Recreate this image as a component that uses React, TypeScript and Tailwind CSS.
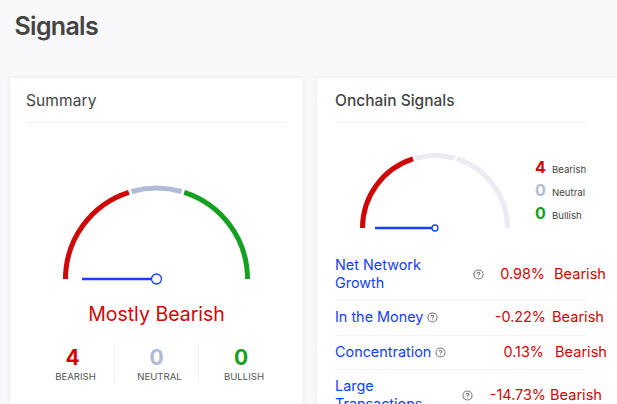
import { CircleHelp } from 'lucide-react';

type GaugeProps = {
  width: number;
  height: number;
  radius: number;
  hub: number;
  needle: number;
  gap: number;
  colors: [string, string, string];
};

const STROKE = 5;

function Gauge({ width, height, radius, hub, needle, gap, colors }: GaugeProps) {
  const cx = width / 2;
  const cy = height - 6;

  // angles run clockwise from the left end of the half circle
  const arc = (from: number, to: number) => {
    const point = (deg: number) => {
      const rad = (deg * Math.PI) / 180;
      return `${cx - radius * Math.cos(rad)} ${cy - radius * Math.sin(rad)}`;
    };
    return `M ${point(from)} A ${radius} ${radius} 0 0 1 ${point(to)}`;
  };

  return (
    <svg width={width} height={height} fill="none" className="block shrink-0">
      <path d={arc(0, 73.2 - gap)} stroke={colors[0]} strokeWidth={STROKE} />
      <path d={arc(73.2 + gap, 106.8 - gap)} stroke={colors[1]} strokeWidth={STROKE} />
      <path d={arc(106.8 + gap, 180)} stroke={colors[2]} strokeWidth={STROKE} />
      <path d={`M ${cx - needle} ${cy} H ${cx - hub}`} stroke="#1440fb" strokeWidth="2.5" />
      <circle cx={cx} cy={cy} r={hub} fill="#fff" stroke="#1440fb" strokeWidth="1.3" />
    </svg>
  );
}

const totals = [
  { label: 'Bearish', value: 4, color: 'text-[#cf0606]' },
  { label: 'Neutral', value: 0, color: 'text-[#b0bad5]' },
  { label: 'Bullish', value: 0, color: 'text-[#16a022]' },
];

const signals = [
  { name: 'Net Network Growth', value: '0.98%', row: 'h-[53px]', label: 'w-[138px]', amount: 'w-[72px]', state: 'ml-[9px]' },
  { name: 'In the Money', value: '-0.22%', row: 'h-[35px] pb-[2px]', label: 'w-[92px]', amount: 'w-[119px]', state: 'ml-[6px]' },
  { name: 'Concentration', value: '0.13%', row: 'h-[34px] pb-px', label: 'w-[100px]', amount: 'w-[109px]', state: 'ml-[11px]' },
  { name: 'Large Transactions', value: '-14.73%', row: 'h-[50px]', label: 'w-[127px]', amount: 'w-[84px]', state: 'ml-[4px]' },
];

function SummaryCard() {
  return (
    <section className="h-[360px] w-[293px] shrink-0 bg-white px-4 shadow-[0_0_4px_rgba(40,40,90,0.09)]">
      <h2 className="h-[45px] border-b border-[#f2f2f4] pt-[11px] text-[15.5px] leading-6 tracking-[0.1px]">Summary</h2>
      <div className="mt-[59px] flex justify-center">
        <Gauge
          width={191}
          height={103}
          radius={91}
          hub={5}
          needle={74.5}
          gap={0.9}
          colors={['#cf0606', '#b0bad5', '#16a022']}
        />
      </div>
      <p className="mt-[15px] text-center text-[19.5px] leading-[28px] text-[#cf0606]">Mostly Bearish</p>
      <div className="mt-4 ml-[5px] flex w-[252px]">
        {totals.map(({ label, value, color }) => (
          <div key={label} className="h-[39px] w-[84px] border-r border-[#f2f2f4] pt-[2px] text-center last:border-r-0">
            <div className={`text-[21px] leading-[24px] font-bold ${color}`}>{value}</div>
            <div className="ml-[6px] text-[9.6px] leading-[13px] text-[#555]">{label.toUpperCase()}</div>
          </div>
        ))}
      </div>
    </section>
  );
}

function OnchainCard() {
  return (
    <section className="h-[360px] w-[320px] shrink-0 bg-white pl-[18px] shadow-[0_0_3px_rgba(40,40,90,0.08)]">
      <h2 className="h-[45px] w-[251px] border-b border-[#f2f2f4] pt-[11px] text-[15.5px] leading-6 font-medium">
        Onchain Signals
      </h2>
      <div className="mt-[24px] flex pl-[20px]">
        <Gauge
          width={160}
          height={87}
          radius={72.5}
          hub={3}
          needle={60}
          gap={0.9}
          colors={['#cf0606', '#ebecf2', '#ebecf2']}
        />
        <ul className="mt-[8px] ml-[20px]">
          {totals.map(({ label, value, color }) => (
            <li key={label} className="flex h-[23px] items-center">
              <span className={`w-[17px] text-[16px] leading-5 font-bold ${color}`}>{value}</span>
              <span className="mt-[6px] text-[9.6px] leading-3">{label}</span>
            </li>
          ))}
        </ul>
      </div>
      <ul className="mt-[14px] w-[251px] text-[14.4px] leading-[18px]">
        {signals.map((signal) => (
          <li key={signal.name} className={`flex items-center border-b border-[#f2f2f4] whitespace-nowrap ${signal.row}`}>
            <a className={`shrink-0 text-[#1440fb] ${signal.label}`}>
              <span className="block w-[100px] whitespace-normal">{signal.name}</span>
            </a>
            <CircleHelp size={11} strokeWidth={2.3} className="mt-px shrink-0 text-[#777]" />
            <span className={`-ml-[11px] shrink-0 text-right text-[#cf0606] ${signal.amount}`}>{signal.value}</span>
            <span className={`text-[14.6px] text-[#cf0606] ${signal.state}`}>Bearish</span>
          </li>
        ))}
      </ul>
    </section>
  );
}

export default function App() {
  return (
    <main className="h-[404px] w-full overflow-hidden bg-[#f8f8fb] font-['Inter',sans-serif] text-[#444]">
      <h1 className="h-[78px] pt-[10px] pl-[14.5px] text-[25px] leading-8 font-semibold tracking-[-0.7px]">Signals</h1>
      <div className="flex gap-[14px] pl-[10px]">
        <SummaryCard />
        <OnchainCard />
      </div>
    </main>
  );
}
